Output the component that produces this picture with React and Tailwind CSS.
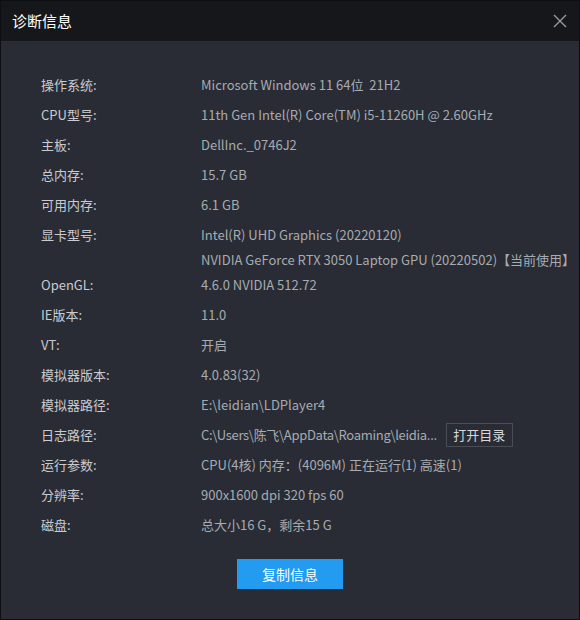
import React from 'react';

const rows = [
  { label: '操作系统:', value: ['Microsoft Windows 11 64位  21H2'] },
  { label: 'CPU型号:', value: ['11th Gen Intel(R) Core(TM) i5-11260H @ 2.60GHz'] },
  { label: '主板:', value: ['DellInc._0746J2'] },
  { label: '总内存:', value: ['15.7 GB'] },
  { label: '可用内存:', value: ['6.1 GB'] },
  { label: '显卡型号:', value: ['Intel(R) UHD Graphics (20220120)', 'NVIDIA GeForce RTX 3050 Laptop GPU (20220502)【当前使用】'] },
  { label: 'OpenGL:', value: ['4.6.0 NVIDIA 512.72'] },
  { label: 'IE版本:', value: ['11.0'] },
  { label: 'VT:', value: ['开启'] },
  { label: '模拟器版本:', value: ['4.0.83(32)'] },
  { label: '模拟器路径:', value: ['E:\\leidian\\LDPlayer4'] },
  { label: '日志路径:', value: ['C:\\Users\\陈飞\\AppData\\Roaming\\leidia...'], action: '打开目录' },
  { label: '运行参数:', value: ['CPU(4核) 内存：(4096M) 正在运行(1) 高速(1)'] },
  { label: '分辨率:', value: ['900x1600 dpi 320 fps 60'] },
  { label: '磁盘:', value: ['总大小16 G，剩余15 G'] },
];

const font = { fontFamily: '"Noto Sans CJK SC", "Noto Sans", sans-serif' };

export default function App() {
  return (
    <div className="w-[580px] h-[620px] border border-[#0e0f12] bg-[#292c34] flex flex-col" style={font}>
      {/* Header */}
      <div className="h-[40px] bg-[#16171b] flex items-center justify-between pl-[11px] pr-[12px] shrink-0">
        <span className="text-[15px] text-white">诊断信息</span>
        <svg width="14" height="14" viewBox="0 0 14 14" className="text-[#9a9a9a]">
          <path d="M1 1L13 13M13 1L1 13" stroke="currentColor" strokeWidth="1.4" />
        </svg>
      </div>

      {/* Body */}
      <div className="pt-[29px] pl-[40px] flex flex-col text-[13px]">
        {rows.map((r, i) => (
          <div key={i} className="flex">
            <div className="w-[160px] shrink-0 h-[30px] flex items-center text-[#c9cbd0]">{r.label}</div>
            <div className="flex flex-col text-[#a7abb2]">
              {r.value.map((v, j) => (
                <div key={j} className={`flex items-center whitespace-pre ${j === 0 ? 'h-[30px]' : 'h-[20px]'}`}>
                  <span className={r.action ? 'tracking-[-0.3px]' : ''}>{v}</span>
                  {r.action && (
                    <span className="ml-[9px] h-[24px] w-[67px] border border-[#4a4d55] text-[#d6d8dc] flex items-center justify-center">
                      {r.action}
                    </span>
                  )}
                </div>
              ))}
            </div>
          </div>
        ))}
      </div>

      <div className="flex justify-center mt-[19px]">
        <button className="w-[106px] h-[30px] bg-[#229bf1] text-white text-[14px]">复制信息</button>
      </div>
    </div>
  );
}
